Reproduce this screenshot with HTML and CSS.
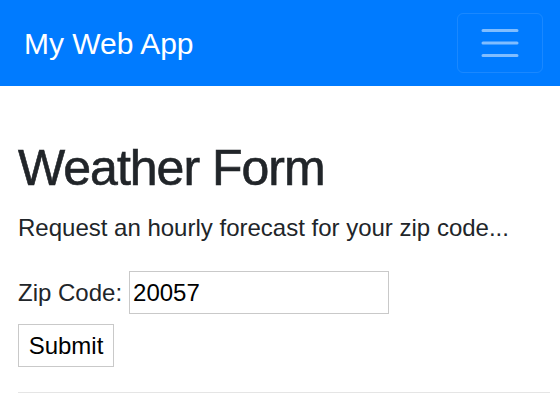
FILE: index.html
```html
<!DOCTYPE html>
<html lang="en">
<head>
<meta charset="utf-8">
<title>My Web App</title>
<link rel="stylesheet" href="styles.css">
</head>
<body>
<nav class="navbar">
  <a class="brand" href="#">My Web App</a>
  <button class="toggler" type="button" aria-label="Toggle navigation">
    <svg class="toggler-icon" width="40" height="30" viewBox="0 0 40 30">
      <path d="M3 2.5H37M3 15H37M3 27.5H37" stroke="rgba(255,255,255,0.5)" stroke-width="3" stroke-linecap="round" fill="none"/>
    </svg>
  </button>
</nav>
<main class="content">
  <h1 class="title">Weather Form</h1>
  <p class="lead">Request an hourly forecast for your zip code...</p>
  <form class="form">
    <div class="row">
      <label class="label" for="zip">Zip Code:</label>
      <input class="input" id="zip" type="text" value="20057">
    </div>
    <button class="submit" type="submit">Submit</button>
  </form>
  <hr class="rule">
</main>
</body>
</html>
```
FILE: styles.css
```css
* { box-sizing: border-box; }
html, body { margin: 0; padding: 0; }
body {
  font-family: "Liberation Sans", Arial, sans-serif;
  font-size: 24px;
  line-height: 1.5;
  color: #212529;
  background: #fff;
}
.navbar {
  height: 86px;
  background: #007bff;
  display: flex;
  align-items: center;
  justify-content: space-between;
  padding: 0 17px 0 24px;
}
.brand {
  color: #fff;
  text-decoration: none;
  font-size: 30px;
  line-height: 45px;
}
.toggler {
  width: 86px;
  height: 60px;
  border: 1.5px solid rgba(255,255,255,0.1);
  border-radius: 6px;
  background: transparent;
  display: flex;
  align-items: center;
  justify-content: center;
  padding: 0;
}
.toggler-icon { display: block; }
.content {
  padding: 52px 10px 0 18px;
}
.title {
  font-size: 50px;
  font-weight: 400;
  letter-spacing: -1px;
  -webkit-text-stroke: 0.6px #212529;
  line-height: 1.2;
  margin: 0 0 12px;
}
.lead {
  margin: 0 0 25px;
}
.form {
  display: flex;
  flex-direction: column;
  align-items: flex-start;
  gap: 10px;
}
.row {
  display: flex;
  align-items: baseline;
  gap: 7px;
}
.label { color: #212529; }
.input {
  font: inherit;
  color: #000;
  width: 260px;
  height: 43px;
  padding: 3px 3px 2px;
  border: 1px solid #c9c9c9;
  border-radius: 0;
  line-height: 36px;
  outline: none;
}
.submit {
  font: inherit;
  color: #000;
  background: #fff;
  border: 1px solid #c9c9c9;
  border-radius: 0;
  height: 43px;
  width: 96px;
  padding: 0;
  line-height: 36px;
}
.rule {
  margin: 25px 0 0;
  border: 0;
  border-top: 1px solid rgba(0,0,0,0.1);
}
```
